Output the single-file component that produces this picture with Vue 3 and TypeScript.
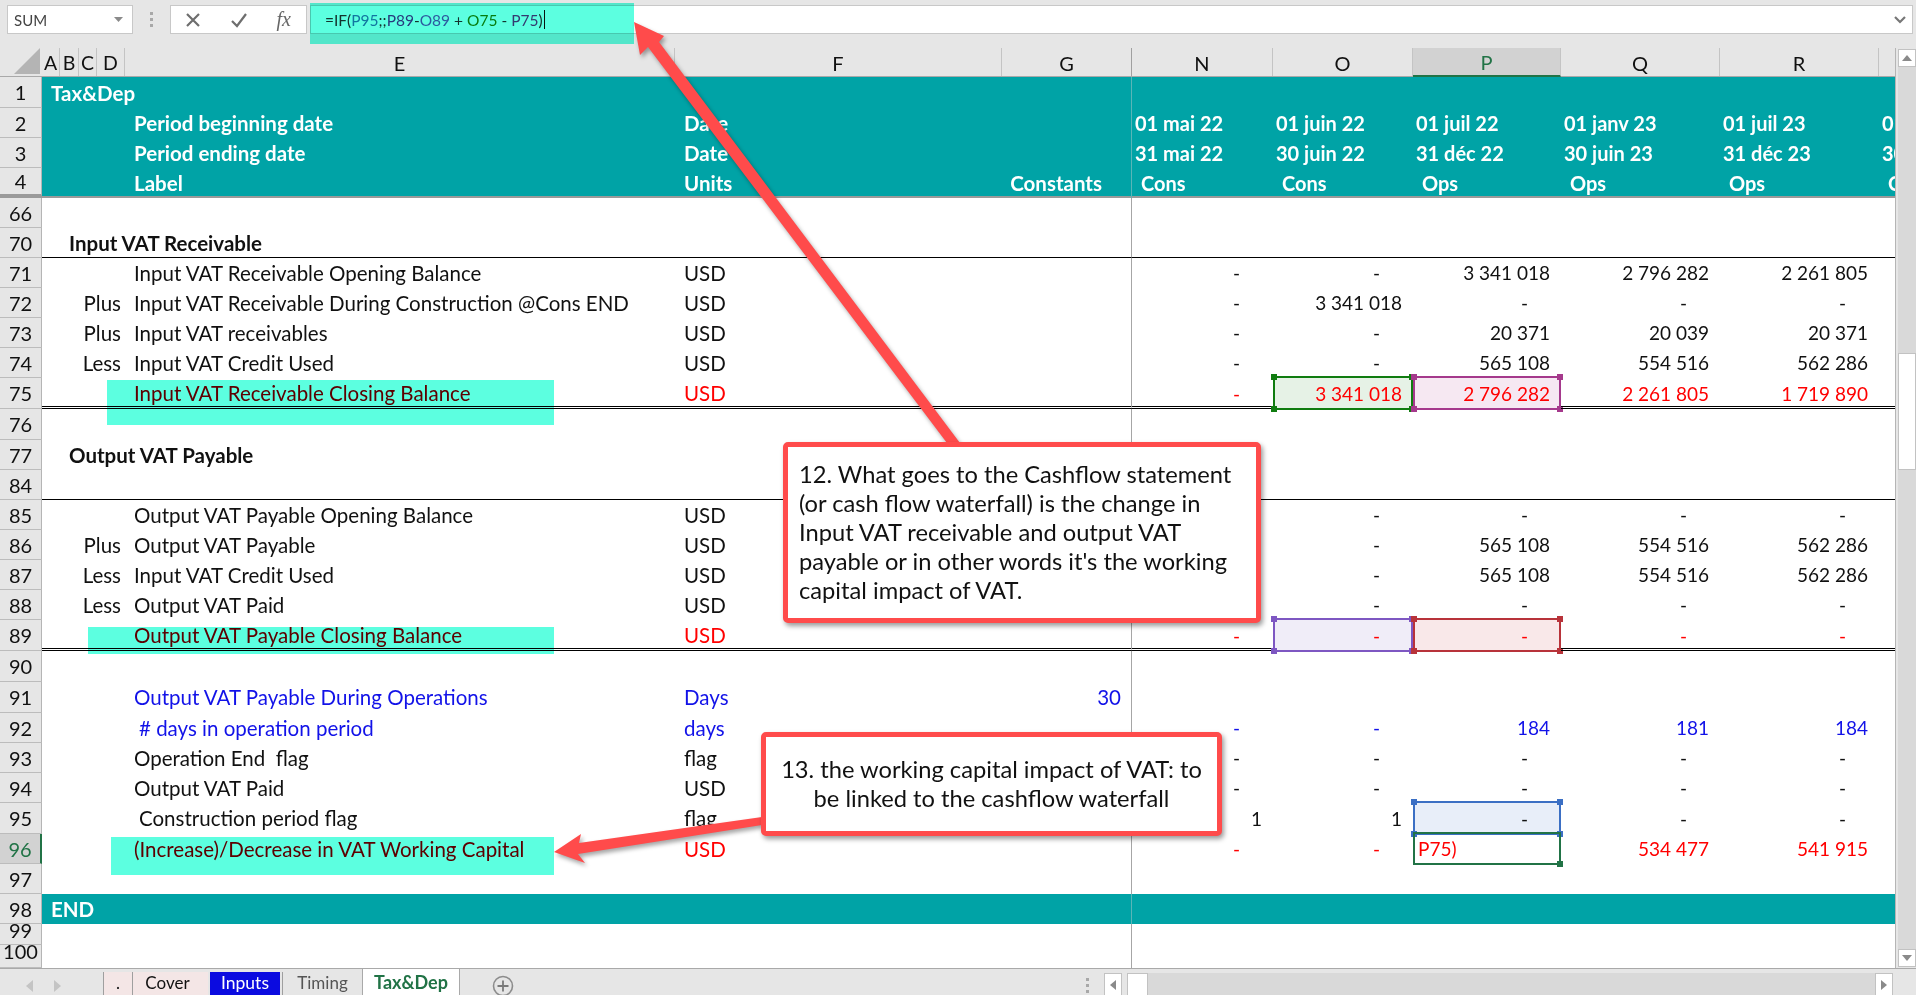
<script setup lang="ts">
interface Row {
  n: number
  h: number
  kind?: string
  head?: string
  lead?: string
  label?: string
  shift?: boolean
  unit?: string
  g?: string
  vals?: string[]
  pad?: boolean
  sels?: Record<number, string>
  line?: string
  active?: boolean
}

const letters = [
  { t: 'A', c: 'a' }, { t: 'B', c: 'a' }, { t: 'C', c: 'a' }, { t: 'D', c: 'a' },
  { t: 'E', c: '' }, { t: 'F', c: '' }, { t: 'G', c: 'frozen' },
  { t: 'N', c: '' }, { t: 'O', c: '' }, { t: 'P', c: 'on' }, { t: 'Q', c: '' }, { t: 'R', c: '' }, { t: '', c: 'last' },
]

const d = '-'
const rows: Row[] = [
  { n: 1, h: 31, kind: 'teal', head: 'Tax&Dep' },
  { n: 2, h: 30, kind: 'teal', label: 'Period beginning date', unit: 'Date', vals: ['01 mai 22', '01 juin 22', '01 juil 22', '01 janv 23', '01 juil 23', '01 janv 24'] },
  { n: 3, h: 30, kind: 'teal', label: 'Period ending date', unit: 'Date', vals: ['31 mai 22', '30 juin 22', '31 déc 22', '30 juin 23', '31 déc 23', '30 juin 24'] },
  { n: 4, h: 30, kind: 'teal freeze', label: 'Label', unit: 'Units', g: 'Constants', pad: true, vals: ['Cons', 'Cons', 'Ops', 'Ops', 'Ops', 'Ops'] },
  { n: 66, h: 30 },
  { n: 70, h: 30, kind: 'sec', head: 'Input VAT Receivable', line: 'single' },
  { n: 71, h: 30, label: 'Input VAT Receivable Opening Balance', unit: 'USD', vals: [d, d, '3 341 018', '2 796 282', '2 261 805'] },
  { n: 72, h: 30, lead: 'Plus', label: 'Input VAT Receivable During Construction @Cons END', unit: 'USD', vals: [d, '3 341 018', d, d, d] },
  { n: 73, h: 30, lead: 'Plus', label: 'Input VAT receivables', unit: 'USD', vals: [d, d, '20 371', '20 039', '20 371'] },
  { n: 74, h: 30, lead: 'Less', label: 'Input VAT Credit Used', unit: 'USD', vals: [d, d, '565 108', '554 516', '562 286'] },
  { n: 75, h: 31, kind: 'red', label: 'Input VAT Receivable Closing Balance', unit: 'USD', vals: [d, '3 341 018', '2 796 282', '2 261 805', '1 719 890'], sels: { 1: 'green', 2: 'magenta' }, line: 'double' },
  { n: 76, h: 31 },
  { n: 77, h: 30, kind: 'sec', head: 'Output VAT Payable' },
  { n: 84, h: 30, line: 'single' },
  { n: 85, h: 30, label: 'Output VAT Payable Opening Balance', unit: 'USD', vals: [d, d, d, d, d] },
  { n: 86, h: 30, lead: 'Plus', label: 'Output VAT Payable', unit: 'USD', vals: [d, d, '565 108', '554 516', '562 286'] },
  { n: 87, h: 30, lead: 'Less', label: 'Input VAT Credit Used', unit: 'USD', vals: [d, d, '565 108', '554 516', '562 286'] },
  { n: 88, h: 30, lead: 'Less', label: 'Output VAT Paid', unit: 'USD', vals: [d, d, d, d, d] },
  { n: 89, h: 31, kind: 'red', label: 'Output VAT Payable Closing Balance', unit: 'USD', vals: [d, d, d, d, d], sels: { 1: 'purple', 2: 'crimson' }, line: 'double' },
  { n: 90, h: 31 },
  { n: 91, h: 31, kind: 'blue', label: 'Output VAT Payable During Operations', unit: 'Days', g: '30' },
  { n: 92, h: 30, kind: 'blue', shift: true, label: '# days in operation period', unit: 'days', vals: [d, d, '184', '181', '184'] },
  { n: 93, h: 30, label: 'Operation End  flag', unit: 'flag', vals: [d, d, d, d, d] },
  { n: 94, h: 30, label: 'Output VAT Paid', unit: 'USD', vals: [d, d, d, d, d] },
  { n: 95, h: 31, shift: true, label: 'Construction period flag', unit: 'flag', vals: ['1', '1', d, d, d], sels: { 2: 'blueSel' } },
  { n: 96, h: 30, kind: 'red', active: true, label: '(Increase)/Decrease in VAT Working Capital', unit: 'USD', vals: [d, d, 'P75)', '534 477', '541 915'], sels: { 2: 'edit' } },
  { n: 97, h: 30 },
  { n: 98, h: 30, kind: 'teal end', head: 'END' },
  { n: 99, h: 21, kind: 'tight' },
  { n: 100, h: 23, kind: 'tight' },
]

const slots = [0, 1, 2, 3, 4, 5]
const handles = ['tl', 'tr', 'bl', 'br']
</script>

<template>
  <div class="stage">
    <header class="formula-row">
      <div class="name-box">
        <span>SUM</span>
        <svg class="caret" width="9" height="5" viewBox="0 0 9 5"><path d="M0 0h9L4.5 5z" /></svg>
      </div>
      <div class="grip"><i></i><i></i><i></i></div>
      <div class="fn-box">
        <svg width="18" height="18" viewBox="0 0 18 18"><path d="M3 3l12 12M15 3L3 15" /></svg>
        <svg width="20" height="18" viewBox="0 0 20 18"><path d="M3 10l5 5L17 3" /></svg>
        <span class="fx">fx</span>
      </div>
      <div class="formula">
        <span>=IF(<b class="f-blue">P95</b>;;<b class="f-purple">P89</b>-<b class="f-violet">O89</b> + <b class="f-green">O75</b> - <b class="f-mag">P75</b>)</span><i class="cursor"></i>
        <svg class="chev" width="12" height="9" viewBox="0 0 12 9"><path d="M1 1l5 5 5-5" /></svg>
      </div>
    </header>

    <main class="body">
      <section class="sheet">
        <div class="row col-head">
          <div class="corner"><svg width="26" height="26" viewBox="0 0 26 26"><path d="M26 0v26H0z" /></svg></div>
          <div v-for="l in letters" :key="l.t" class="ch" :class="l.c">{{ l.t }}</div>
        </div>

        <div
          v-for="r in rows"
          :key="r.n"
          class="row"
          :class="[r.kind, r.line]"
          :style="{ height: r.h + 'px' }"
        >
          <div class="rh" :class="{ active: r.active }">{{ r.n }}</div>
          <div class="c lead">
            <span v-if="r.head" class="head">{{ r.head }}</span>
            <span v-else-if="r.lead" class="plus">{{ r.lead }}</span>
          </div>
          <div class="c label" :class="{ shift: r.shift }">{{ r.label }}</div>
          <div class="c unit">{{ r.unit }}</div>
          <div class="c g" :class="{ pad: r.pad }">{{ r.g }}</div>
          <div
            v-for="i in slots"
            :key="i"
            class="c v"
            :class="[
              'col' + i,
              { dash: r.vals && r.vals[i] === '-' },
              r.sels && r.sels[i] ? 'has-' + r.sels[i] : '',
            ]"
          >
            <span>{{ r.vals ? r.vals[i] : '' }}</span>
            <div v-if="r.sels && r.sels[i]" class="sel" :class="r.sels[i]">
              <i v-for="h in handles" :key="h" :class="h"></i>
            </div>
          </div>
        </div>
      </section>

      <aside class="vbar">
        <button class="sb-btn"><svg width="10" height="6" viewBox="0 0 10 6"><path d="M5 0l5 6H0z" /></svg></button>
        <div class="v-track"><div class="v-thumb"></div></div>
        <button class="sb-btn"><svg width="10" height="6" viewBox="0 0 10 6"><path d="M0 0h10L5 6z" /></svg></button>
      </aside>
    </main>

    <footer class="tabs">
      <div class="nav">
        <svg width="7" height="12" viewBox="0 0 7 12"><path d="M7 0v12L0 6z" /></svg>
        <svg width="7" height="12" viewBox="0 0 7 12"><path d="M0 0v12l7-6z" /></svg>
      </div>
      <div class="tab dot">.</div>
      <div class="tab cover">Cover</div>
      <div class="tab inputs">Inputs</div>
      <div class="tab timing">Timing</div>
      <div class="tab current">Tax&amp;Dep</div>
      <svg class="add" width="24" height="24" viewBox="0 0 24 24"><circle cx="12" cy="12" r="9.5" /><path d="M12 6.5v11M6.5 12h11" /></svg>
      <div class="h-grip"><i></i><i></i><i></i></div>
      <div class="hbar">
        <button class="sb-btn"><svg width="6" height="10" viewBox="0 0 6 10"><path d="M6 0v10L0 5z" /></svg></button>
        <div class="h-thumb"></div>
        <div class="h-track"></div>
        <button class="sb-btn"><svg width="6" height="10" viewBox="0 0 6 10"><path d="M0 0v10l6-5z" /></svg></button>
      </div>
    </footer>

    <div class="mark mark-formula"></div>
    <div class="mark mark-75"></div>
    <div class="mark mark-89"></div>
    <div class="mark mark-96"></div>

    <svg class="arrows" width="1916" height="995" viewBox="0 0 1916 995">
      <path d="M634 22L664 36L659 42L960 443L947 443L648 47L640 55Z" />
      <path d="M554 852L581 834L579 843L762 817L762 825L578 854L585 863Z" />
    </svg>

    <div class="note note-12">
      12. What goes to the Cashflow statement<br />
      (or cash flow waterfall) is the change in<br />
      Input VAT receivable and output VAT<br />
      payable or in other words it's the working<br />
      capital impact of VAT.
    </div>
    <div class="note note-13">
      13. the working capital impact of VAT: to<br />
      be linked to the cashflow waterfall
    </div>
  </div>
</template>

<style>
html, body { margin: 0; padding: 0; background: #e6e6e6; }
</style>

<style scoped>
.stage {
  position: relative;
  width: 1916px;
  height: 995px;
  overflow: hidden;
  background: #e6e6e6;
  font-family: Lato, "Liberation Sans", sans-serif;
  font-size: 20.5px;
  color: #111;
  display: flex;
  flex-direction: column;
}

/* formula bar */
.formula-row {
  height: 48px;
  flex: none;
  box-sizing: border-box;
  padding: 5px 3px 14px 7px;
  display: flex;
  align-items: stretch;
}
.name-box, .fn-box, .formula {
  background: #fff;
  border: 1px solid #c8c8c8;
  box-sizing: border-box;
  display: flex;
  align-items: center;
}
.name-box {
  width: 126px;
  padding: 0 9px 0 6px;
  justify-content: space-between;
  font-size: 15px;
  color: #444;
}
.caret path { fill: #8a8a8a; }
.grip {
  width: 37px;
  display: flex;
  flex-direction: column;
  align-items: center;
  justify-content: center;
  gap: 3px;
}
.grip i, .h-grip i { display: block; width: 3px; height: 3px; background: #a8a8a8; }
.fn-box {
  width: 137px;
  margin-right: 3px;
  padding: 0 15px 0 13px;
  justify-content: space-between;
}
.fn-box svg path { fill: none; stroke: #6e6e6e; stroke-width: 2.2; }
.fx {
  font-family: "Liberation Serif", serif;
  font-style: italic;
  font-size: 20px;
  color: #666;
}
.formula {
  flex: 1;
  padding-left: 14px;
  font-size: 15.5px;
  color: #333;
  position: relative;
}
.formula b { font-weight: 400; }
.f-blue { color: #2e75b6; }
.f-purple { color: #6b3a8e; }
.f-violet { color: #7a5ab5; }
.f-green { color: #107c10; }
.f-mag { color: #8e3a80; }
.cursor { display: inline-block; width: 1px; height: 19px; background: #111; margin-left: 1px; }
.chev { position: absolute; right: 6px; top: 10px; }
.chev path { fill: none; stroke: #777; stroke-width: 2.2; }

/* sheet */
.body { flex: none; height: 920px; display: flex; }
.sheet { width: 1895px; background: #fff; display: flex; flex-direction: column; border-right: 1px solid #b5b5b5; box-sizing: content-box; }

.row {
  display: grid;
  grid-template-columns: 42px 83px 550px 327px 130px 141px 140px 148px 159px 159px 16px;
  grid-template-rows: 100%;
  align-items: stretch;
  flex: none;
  box-sizing: border-box;
}
.col-head {
  height: 29px;
  grid-template-columns: 42px 18px 19px 18px 28px 550px 327px 130px 141px 140px 148px 159px 159px 16px;
  background: #e6e6e6;
  border-bottom: 1px solid #a9a9a9;
}
.corner { display: flex; align-items: flex-end; justify-content: flex-end; padding: 0 2px 2px 0; }
.corner svg path { fill: #b4b4b4; }
.ch {
  display: flex;
  align-items: center;
  justify-content: center;
  border-right: 1px solid #c4c4c4;
  font-size: 20px;
  padding-top: 1px;
  box-sizing: border-box;
}
.ch.a { font-size: 19.5px; }
.ch.frozen { border-right-color: #a0a0a0; }
.ch.on {
  background: #d2d2d2;
  color: #217346;
  border-bottom: 2px solid #217346;
  margin-bottom: -1px;
}
.ch.last { border-right: none; }

.rh {
  background: #e6e6e6;
  border-right: 1px solid #b5b5b5;
  border-bottom: 1px solid #bcbcbc;
  box-sizing: border-box;
  display: flex;
  align-items: center;
  justify-content: center;
  font-size: 20px;
  line-height: 1;
}
.rh.active {
  background: #d2d2d2;
  color: #217346;
  border-right: 2px solid #217346;
}
.tight .rh { align-items: flex-start; padding-top: 1px; line-height: 11px; }

.c {
  display: flex;
  align-items: center;
  white-space: pre;
  box-sizing: border-box;
  position: relative;
  min-width: 0;
  padding-bottom: 1px;
}
.lead { justify-content: flex-end; padding-right: 4px; position: relative; }
.head { position: absolute; left: 9px; }
.sec .head { left: 27px; font-weight: 700; }
.plus { color: #111; }
.label { padding-left: 9px; }
.label.shift { padding-left: 14px; }
.unit { padding-left: 9px; }
.g {
  justify-content: flex-end;
  padding-right: 10px;
  border-right: 1px solid #a6a6a6;
}
.g.pad { padding-right: 29px; }
.v { justify-content: flex-end; padding-right: 11px; font-size: 19px; }
.v.dash { padding-right: 33px; }
.col5 { overflow: hidden; }

.teal { background: #00a3a6; color: #fff; font-weight: 700; }
.teal .c { justify-content: flex-start; }
.teal .g { justify-content: flex-end; border-right-color: #5ab5b7; }
.teal .v { padding-left: 3px; padding-right: 0; font-size: 20px; }
.teal.freeze { border-bottom: 2px solid #9a9a9a; }
.teal.freeze .c { margin-bottom: -2px; }
.teal.freeze .v { padding-left: 9px; }
.teal.freeze .rh { border-bottom-width: 2px; border-bottom-color: #9a9a9a; }
.teal .rh { color: #111; font-weight: 400; }
.teal .lead { padding: 0; }
.teal .head { left: 9px; }

.red .unit, .red .label, .red .v { color: #f00; }
.blue .label, .blue .unit, .blue .g, .blue .v { color: #1212e8; }

.single .c { border-bottom: 1px solid #000; padding-top: 1px; }
.double .c { border-bottom: 3px double #000; padding-top: 3px; }
.double .c.has-green, .double .c.has-magenta, .double .c.has-purple, .double .c.has-crimson { border-bottom: none; padding-top: 0; }

.sel {
  position: absolute;
  inset: -2px 0 -1px 0;
  border: 2px solid #888;
  box-sizing: border-box;
  pointer-events: none;
}
.sel i { position: absolute; width: 6px; height: 6px; background: inherit; }
.sel .tl { left: -4px; top: -4px; }
.sel .tr { right: -4px; top: -4px; }
.sel .bl { left: -4px; bottom: -4px; }
.sel .br { right: -4px; bottom: -4px; }
.sel.green { border-color: #107c10; }
.sel.green i { background: #107c10; }
.sel.magenta { border-color: #a5398c; }
.sel.magenta i { background: #a5398c; }
.sel.purple { border-color: #7e57c2; }
.sel.purple i { background: #7e57c2; }
.sel.crimson { border-color: #b8333a; }
.sel.crimson i { background: #b8333a; }
.sel.blueSel { border-color: #3b6fc4; }
.sel.blueSel i { background: #3b6fc4; }
.sel.edit { border-color: #217346; }
.sel.edit i { display: none; }
.sel.edit .br { display: block; background: #217346; }
.has-green { background: #e6f2e6; }
.has-magenta { background: #f6e8f2; }
.has-purple { background: #f0edf8; }
.has-crimson { background: #f9e8e9; }
.has-blueSel { background: #e8eef9; }
.has-edit { justify-content: flex-start; padding-left: 5px; }

/* scroll bars */
.vbar {
  width: 18px;
  margin-left: 2px;
  display: flex;
  flex-direction: column;
  padding: 1px 0;
  box-sizing: border-box;
}
.sb-btn {
  width: 18px;
  height: 18px;
  padding: 0;
  background: #fff;
  border: 1px solid #c2c2c2;
  display: flex;
  align-items: center;
  justify-content: center;
  flex: none;
  box-sizing: border-box;
}
.sb-btn path { fill: #8a8a8a; }
.v-track {
  flex: 1;
  background: #d9d9d9;
  padding-top: 286px;
  box-sizing: border-box;
}
.v-thumb { height: 117px; background: #fff; border: 1px solid #c2c2c2; box-sizing: border-box; }

.tabs {
  flex: 1;
  position: relative;
  display: flex;
  align-items: stretch;
  padding: 3px 0 1px 0;
  box-sizing: border-box;
  border-top: 1px solid #a9a9a9;
  font-size: 17px;
}
.nav {
  width: 103px;
  padding-left: 26px;
  box-sizing: border-box;
  display: flex;
  gap: 21px;
  align-items: center;
}
.nav path { fill: #c4c4c4; }
.tab {
  display: flex;
  align-items: center;
  justify-content: center;
  box-sizing: border-box;
  border-left: 1px solid #9f9f9f;
  padding-bottom: 6px;
}
.dot { width: 29px; background: #f4e6e6; }
.cover { width: 76px; background: #f4e6e6; padding-right: 6px; }
.inputs { width: 70px; background: #0b0be0; color: #fff; border-left: none; margin: 0 2px; font-size: 17.5px; }
.timing { width: 80px; color: #555; }
.current {
  width: 98px;
  background: #fff;
  color: #217346;
  font-weight: 700;
  font-size: 18px;
  border: 1px solid #a9a9a9;
  border-top: none;
  border-bottom: 2px solid #217346;
  margin-top: -3px;
  margin-bottom: -1px;
  padding-bottom: 3px;
}
.add { align-self: center; margin-left: 31px; }
.add circle { fill: none; stroke: #8c8c8c; stroke-width: 1.6; }
.add path { fill: none; stroke: #7a7a7a; stroke-width: 1.8; }
.h-grip {
  margin-left: auto;
  display: flex;
  flex-direction: column;
  gap: 3px;
  justify-content: center;
  padding-right: 15px;
}
.hbar {
  width: 789px;
  margin: 1px 23px 2px 0;
  display: flex;
  align-items: stretch;
  gap: 4px;
}
.hbar .sb-btn { height: auto; }
.h-thumb { width: 21px; background: #fff; border: 1px solid #c2c2c2; box-sizing: border-box; margin-left: 1px; }
.h-track { flex: 1; background: #d9d9d9; margin-left: -4px; margin-right: -4px; }

/* annotations */
.mark { position: absolute; background: #5cffe0; mix-blend-mode: multiply; pointer-events: none; }
.mark-formula { left: 310px; top: 3px; width: 324px; height: 41px; }
.mark-75 { left: 107px; top: 380px; width: 447px; height: 45px; }
.mark-89 { left: 88px; top: 627px; width: 466px; height: 27px; }
.mark-96 { left: 111px; top: 837px; width: 443px; height: 38px; }

.arrows { position: absolute; left: 0; top: 0; pointer-events: none; filter: drop-shadow(2px 3px 2px rgba(0, 0, 0, .35)); }
.arrows path { fill: #ff4b4b; }

.note {
  position: absolute;
  background: #fff;
  border: 5px solid #ff4b4b;
  border-radius: 5px;
  box-sizing: border-box;
  box-shadow: 2px 3px 5px rgba(0, 0, 0, .4);
  font-size: 23.7px;
  color: #111;
  white-space: nowrap;
}
.note-12 { left: 783px; top: 442px; width: 478px; height: 181px; padding: 13px 0 0 11px; line-height: 29px; }
.note-13 { left: 761px; top: 732px; width: 461px; height: 104px; padding-top: 18px; line-height: 28.5px; text-align: center; }
</style>
